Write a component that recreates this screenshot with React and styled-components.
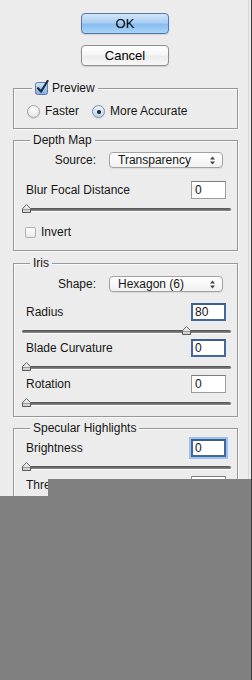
import React from 'react';
import styled, { createGlobalStyle } from 'styled-components';

const Global = createGlobalStyle`
  html, body { margin: 0; padding: 0; background: #ececec; }
  body { font-family: "Liberation Sans", Arial, sans-serif; font-size: 12px; color: #161616; }
`;

const Window = styled.div`
  position: relative;
  width: 252px;
  height: 680px;
  overflow: hidden;
  box-sizing: border-box;
  background: #ececec;
  border-right: 1px solid #3c3c3c;
`;

const Panel = styled.div`
  width: 249px;
  box-sizing: border-box;
  min-height: 100%;
  border-right: 1px solid #d6d6d6;
  display: flex;
  flex-direction: column;
  padding-top: 13px;
`;

const ButtonStack = styled.div`
  display: flex;
  flex-direction: column;
  align-items: center;
  gap: 11px;
  padding-left: 2px;
`;

const Button = styled.button`
  width: 88px;
  height: 21px;
  box-sizing: border-box;
  padding: 0;
  font: 13px "Liberation Sans", Arial, sans-serif;
  color: #000;
  border-radius: 4px;
  border: 1px solid ${p => (p.$primary ? '#5478ad' : '#8e8e8e')};
  background: ${p =>
    p.$primary
      ? 'linear-gradient(#d3e6f9 0%, #aacff3 45%, #88bdf0 55%, #a9d3f8 100%)'
      : 'linear-gradient(#ffffff 0%, #f6f6f6 45%, #ececec 55%, #f7f7f7 100%)'};
  box-shadow: 0 1px 1px rgba(0, 0, 0, 0.12);
`;

const Group = styled.section`
  margin: ${p => p.$mt}px 10px 0 13px;
  border: 1px solid #979797;
  box-shadow: inset 1px 1px 0 #fafafa, 1px 1px 0 #fafafa;
  padding: 0 11px ${p => p.$pb}px 12px;
  display: flex;
  flex-direction: column;
`;

const GroupTitle = styled.div`
  align-self: flex-start;
  display: flex;
  align-items: center;
  gap: 3px;
  height: 14px;
  line-height: 14px;
  margin: -8px 0 0 ${p => p.$ml}px;
  padding: 0 3px;
  background: #ececec;
  position: relative;
`;

const RadioRow = styled.div`
  display: flex;
  align-items: center;
  height: 13px;
  margin: 10px 0 0 1px;
  gap: 13px;
`;

const Option = styled.label`
  display: flex;
  align-items: center;
  gap: 5px;
  line-height: 13px;
`;

const RadioDot = styled.span`
  width: 13px;
  height: 13px;
  box-sizing: border-box;
  border-radius: 50%;
  display: flex;
  align-items: center;
  justify-content: center;
  border: 1px solid ${p => (p.$on ? '#7790b4' : '#a3a3a3')};
  background: ${p =>
    p.$on
      ? 'linear-gradient(#eaf2fb, #bcd4ee)'
      : 'radial-gradient(circle at 50% 35%, #ffffff, #e4e4e4 80%)'};
  box-shadow: 0 1px 1px rgba(0, 0, 0, 0.1);
  &::after {
    content: '';
    display: ${p => (p.$on ? 'block' : 'none')};
    width: 4px;
    height: 4px;
    border-radius: 50%;
    background: #222;
  }
`;

const SelectRow = styled.div`
  display: grid;
  grid-template-columns: 70px 114px;
  column-gap: 13px;
  align-items: center;
  margin-top: ${p => p.$mt}px;
`;

const SelectLabel = styled.span`
  text-align: right;
`;

const Select = styled.div`
  height: 16px;
  box-sizing: border-box;
  border: 1px solid #a2a2a2;
  border-radius: 4px;
  background: linear-gradient(#ffffff, #f1f1f1);
  box-shadow: 0 1px 1px rgba(0, 0, 0, 0.08);
  display: flex;
  align-items: center;
  justify-content: space-between;
  padding: 0 7px 0 8px;
  line-height: 14px;
`;

const ParamRow = styled.div`
  display: flex;
  align-items: center;
  justify-content: space-between;
  margin-top: ${p => p.$mt}px;
`;

const Field = styled.input`
  width: 35px;
  height: 18px;
  box-sizing: border-box;
  margin: 0;
  font: 12px "Liberation Sans", Arial, sans-serif;
  color: #111;
  background: #fff;
  outline: none;
  border: ${p => (p.$focus ? '2px solid #47679a' : '1px solid #9c9c9c')};
  border-top-color: ${p => (p.$focus ? '#3d5d90' : '#7c7c7c')};
  padding: 0 0 0 ${p => (p.$focus ? 2 : 3)}px;
  box-shadow: ${p => (p.$glow ? '0 0 0 2px #9cc2ee' : 'none')};
`;

const Slider = styled.div`
  position: relative;
  height: 10px;
  box-sizing: border-box;
  padding-top: 4px;
  margin: 5px -5px 0 -4px;
`;

const Track = styled.div`
  height: 3px;
  border-radius: 2px;
  background: linear-gradient(#4f4f4f, #8c8c8c);
  box-shadow: 0 1px 0 #fdfdfd;
`;

const ThumbBox = styled.svg`
  position: absolute;
  top: 0;
  width: 9px;
  height: 9px;
`;

const CheckRow = styled.label`
  display: flex;
  align-items: center;
  gap: 5px;
  height: 12px;
  margin: 12px 0 0 -1px;
`;

const EmptyBox = styled.span`
  width: 11px;
  height: 11px;
  box-sizing: border-box;
  border: 1px solid #b0b0b0;
  border-radius: 2px;
  background: linear-gradient(#ffffff, #e9e9e9);
`;

const Cover = styled.div`
  position: absolute;
  left: ${p => p.$l}px;
  top: ${p => p.$t}px;
  right: 0;
  bottom: 0;
  background: #808080;
`;

const Thumb = ({ value }) => (
  <ThumbBox viewBox="0 0 9 9" style={{ left: `calc((100% - 9px) * ${value / 100})` }}>
    <defs>
      <linearGradient id="tg" x1="0" y1="0" x2="0" y2="1">
        <stop offset="0" stopColor="#ffffff" />
        <stop offset="1" stopColor="#c8c8c8" />
      </linearGradient>
    </defs>
    <path d="M0.5 8.5 V4.6 L4.5 0.6 L8.5 4.6 V8.5 Z" fill="url(#tg)" stroke="#5c5c5c" strokeWidth="1" />
    <path d="M1 5.5 H8" stroke="#9a9a9a" strokeWidth="1" />
  </ThumbBox>
);

const Range = ({ value = 0 }) => (
  <Slider>
    <Track />
    <Thumb value={value} />
  </Slider>
);

const Arrows = () => (
  <svg width="5" height="9" viewBox="0 0 5 9">
    <path d="M0 3.5 L2.5 0.5 L5 3.5 Z" fill="#444" />
    <path d="M0 5.5 L2.5 8.5 L5 5.5 Z" fill="#444" />
  </svg>
);

const CheckedBox = () => (
  <svg width="14" height="15" viewBox="0 0 14 15" style={{ marginTop: '-2px' }}>
    <defs>
      <linearGradient id="cg" x1="0" y1="0" x2="0" y2="1">
        <stop offset="0" stopColor="#d7e7f8" />
        <stop offset="1" stopColor="#7eaee2" />
      </linearGradient>
    </defs>
    <rect x="0.5" y="2.5" width="12" height="12" rx="2" fill="url(#cg)" stroke="#5c7ba6" />
    <path d="M3 8.2 L6 11.6 L12.6 1" fill="none" stroke="#1d2d47" strokeWidth="2.2" strokeLinecap="round" strokeLinejoin="round" />
  </svg>
);

const Param = ({ label, value, mt, focus, glow }) => (
  <ParamRow $mt={mt}>
    <span>{label}</span>
    <Field value={value} readOnly $focus={focus} $glow={glow} />
  </ParamRow>
);

export default function App() {
  return (
    <>
      <Global />
      <Window>
        <Panel>
          <ButtonStack>
            <Button $primary>OK</Button>
            <Button>Cancel</Button>
          </ButtonStack>

          <Group $mt={22} $pb={10}>
            <GroupTitle $ml={6}>
              <CheckedBox />
              <span>Preview</span>
            </GroupTitle>
            <RadioRow>
              <Option>
                <RadioDot />
                <span>Faster</span>
              </Option>
              <Option>
                <RadioDot $on />
                <span>More Accurate</span>
              </Option>
            </RadioRow>
          </Group>

          <Group $mt={11} $pb={12}>
            <GroupTitle $ml={4}>Depth Map</GroupTitle>
            <SelectRow $mt={5}>
              <SelectLabel>Source:</SelectLabel>
              <Select>
                <span>Transparency</span>
                <Arrows />
              </Select>
            </SelectRow>
            <Param label="Blur Focal Distance" value="0" mt={13} />
            <Range value={0} />
            <CheckRow>
              <EmptyBox />
              <span>Invert</span>
            </CheckRow>
          </Group>

          <Group $mt={12} $pb={8}>
            <GroupTitle $ml={4}>Iris</GroupTitle>
            <SelectRow $mt={6}>
              <SelectLabel>Shape:</SelectLabel>
              <Select>
                <span>Hexagon (6)</span>
                <Arrows />
              </Select>
            </SelectRow>
            <Param label="Radius" value="80" mt={11} focus />
            <Range value={80} />
            <Param label="Blade Curvature" value="0" mt={3} focus />
            <Range value={0} />
            <Param label="Rotation" value="0" mt={3} />
            <Range value={0} />
          </Group>

          <Group $mt={11} $pb={10}>
            <GroupTitle $ml={4}>Specular Highlights</GroupTitle>
            <Param label="Brightness" value="0" mt={4} focus glow />
            <Range value={0} />
            <Param label="Threshold" value="255" mt={4} />
            <Range value={100} />
          </Group>
        </Panel>
        <Cover $l={48} $t={479} />
        <Cover $l={0} $t={496} />
      </Window>
    </>
  );
}
